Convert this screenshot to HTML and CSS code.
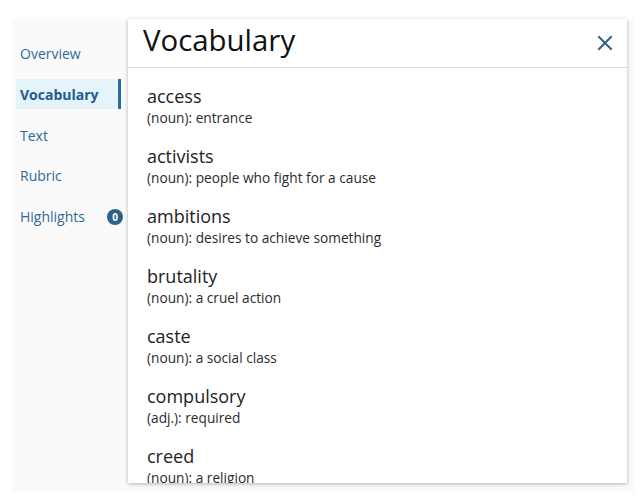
FILE: index.html
```
<!DOCTYPE html>
<html>
<head>
<meta charset="utf-8">
<link rel="stylesheet" href="styles.css">
</head>
<body>
<div class="shell">
  <nav class="side">
    <div class="nav-item">Overview</div>
    <div class="nav-item active">Vocabulary</div>
    <div class="nav-item">Text</div>
    <div class="nav-item">Rubric</div>
    <div class="nav-item">Highlights <span class="badge">0</span></div>
  </nav>
  <section class="panel">
    <header class="head">
      <h1 class="title">Vocabulary</h1>
      <button class="close" aria-label="Close"><svg width="16" height="16" viewBox="0 0 16 16"><path d="M2 2L14 14M14 2L2 14" stroke="#2f6187" stroke-width="2" stroke-linecap="square"/></svg></button>
    </header>
    <div class="list">
      <div class="entry"><div class="word">access</div><div class="def">(noun): entrance</div></div>
      <div class="entry"><div class="word">activists</div><div class="def">(noun): people who fight for a cause</div></div>
      <div class="entry"><div class="word">ambitions</div><div class="def">(noun): desires to achieve something</div></div>
      <div class="entry"><div class="word">brutality</div><div class="def">(noun): a cruel action</div></div>
      <div class="entry"><div class="word">caste</div><div class="def">(noun): a social class</div></div>
      <div class="entry"><div class="word">compulsory</div><div class="def">(adj.): required</div></div>
      <div class="entry"><div class="word">creed</div><div class="def">(noun): a religion</div></div>
    </div>
  </section>
</div>
</body>
</html>
```
FILE: styles.css
```
html, body { margin: 0; padding: 0; background: #fff; }
body { font-family: "Open Sans", "Noto Sans", sans-serif; }
.shell {
  margin: 19px 6px 10px 12px;
  height: 473px;
  background: #fafafa;
  display: flex;
  align-items: flex-start;
}
.side {
  width: 116px;
  box-sizing: border-box;
  padding: 19.5px 0 0 4px;
  display: flex;
  flex-direction: column;
  gap: 10.75px;
}
.nav-item {
  width: 105px;
  height: 30px;
  box-sizing: border-box;
  padding-left: 4px;
  display: flex;
  align-items: center;
  font-size: 14px;
  color: #2f6a96;
  border-right: 3px solid transparent;
}
.nav-item.active {
  background: #e5f3fb;
  border-right-color: #2a6aa6;
  font-weight: 700;
  color: #1f5b8c;
}
.badge {
  margin-left: auto;
  margin-right: -5px;
  width: 16px;
  height: 16px;
  border-radius: 50%;
  background: #2f6187;
  color: #fff;
  font-size: 10px;
  font-weight: 700;
  display: flex;
  align-items: center;
  justify-content: center;
}
.panel {
  width: 499px;
  height: 464px;
  background: #fff;
  box-shadow: 0 1px 4px rgba(0,0,0,0.28);
  display: flex;
  flex-direction: column;
  overflow: hidden;
}
.head {
  height: 48px;
  flex: none;
  border-bottom: 1px solid #dcdcdc;
  display: flex;
  align-items: center;
  justify-content: space-between;
  padding: 0 14px 0 15px;
}
.title {
  margin: 0;
  font-size: 29.4px;
  font-weight: 400;
  color: #111;
  line-height: 40px;
  margin-top: -6px;
}
.close {
  border: 0;
  background: none;
  padding: 0;
  width: 16px;
  height: 16px;
  display: flex;
  margin-top: -1px;
}
.list {
  padding: 17px 0 0 19px;
  overflow: hidden;
  flex: 1;
}
.entry { margin-bottom: 17px; }
.word {
  font-size: 18px;
  line-height: 23px;
  color: #222;
}
.def {
  font-size: 13.7px;
  line-height: 20px;
  color: #2b2b2b;
}
```
